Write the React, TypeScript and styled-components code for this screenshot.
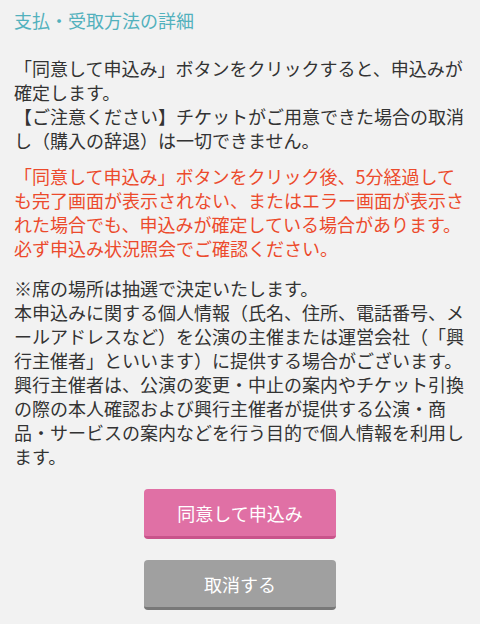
import React from "react";
import styled, { createGlobalStyle } from "styled-components";

const Global = createGlobalStyle`
  html, body { margin: 0; padding: 0; background: #f2f2f2; }
  body {
    font-family: "Noto Sans CJK JP", "Noto Sans", sans-serif;
    text-spacing-trim: space-all;
  }
`;

const Page = styled.div`
  padding: 8px 14px 14px;
  color: #333333;
  font-size: 18px;
  line-height: 24px;
  text-spacing-trim: space-all;
`;

const Heading = styled.h2`
  margin: 0 0 24px;
  font-size: 18px;
  line-height: 24px;
  font-weight: normal;
  color: #52b1bd;
`;

const Para = styled.p<{ $warn?: boolean; $gap?: number }>`
  margin: 0 0 ${(p) => p.$gap ?? 12}px;
  color: ${(p) => (p.$warn ? "#ec4a2c" : "#333333")};
`;

const Actions = styled.div`
  display: flex;
  flex-direction: column;
  align-items: center;
  gap: 21px;
  margin-top: 21px;
`;

const Button = styled.button<{ $kind: "primary" | "cancel" }>`
  width: 192px;
  height: 50px;
  border: none;
  border-radius: 4px;
  border-bottom: 3px solid ${(p) => (p.$kind === "primary" ? "#c9538b" : "#787878")};
  background: ${(p) => (p.$kind === "primary" ? "#e070a5" : "#a0a0a0")};
  color: #ffffff;
  font-family: inherit;
  font-size: 18px;
  padding: 0;
  cursor: pointer;
`;

export default function App() {
  return (
    <>
      <Global />
      <Page>
        <Heading>支払・受取方法の詳細</Heading>
        <Para>
          「同意して申込み」ボタンをクリックすると、申込みが確定します。
          <br />
          【ご注意ください】チケットがご用意できた場合の取消し（購入の辞退）は一切できません。
        </Para>
        <Para $warn $gap={16}>
          「同意して申込み」ボタンをクリック後、5分経過しても完了画面が表示されない、またはエラー画面が表示された場合でも、申込みが確定している場合があります。必ず申込み状況照会でご確認ください。
        </Para>
        <Para $gap={0}>
          ※席の場所は抽選で決定いたします。
          <br />
          本申込みに関する個人情報（氏名、住所、電話番号、メールアドレスなど）を公演の主催または運営会社（「興行主催者」といいます）に提供する場合がございます。興行主催者は、公演の変更・中止の案内やチケット引換の際の本人確認および興行主催者が提供する公演・商品・サービスの案内などを行う目的で個人情報を利用します。
        </Para>
        <Actions>
          <Button $kind="primary">同意して申込み</Button>
          <Button $kind="cancel">取消する</Button>
        </Actions>
      </Page>
    </>
  );
}
